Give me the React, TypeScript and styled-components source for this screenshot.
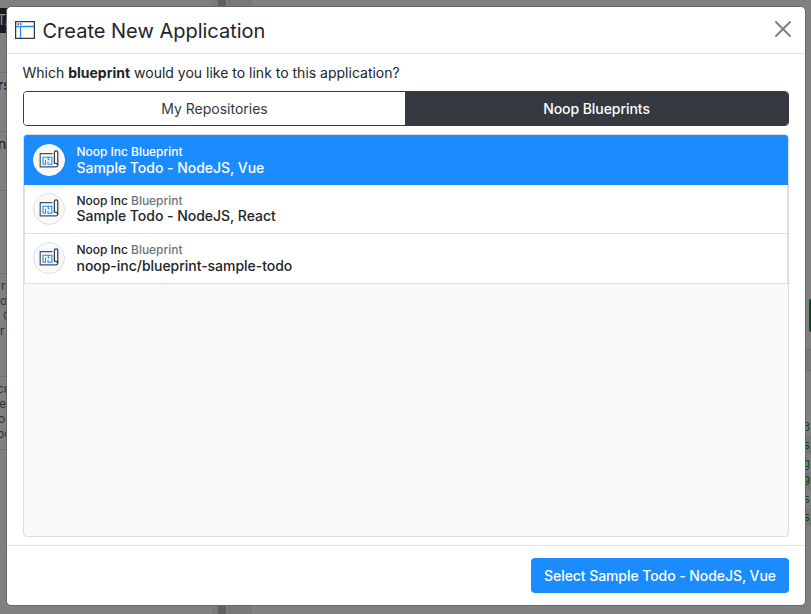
import React, { useState } from "react";
import styled, { createGlobalStyle } from "styled-components";

const GlobalStyle = createGlobalStyle`
  *, *::before, *::after { box-sizing: border-box; }
  body {
    margin: 0;
    overflow: hidden;
    color: #212529;
    font-family: Inter, "Liberation Sans", sans-serif;
    font-size: 14px;
    line-height: 21px;
  }
  button { font: inherit; }
`;

const Screen = styled.div`
  position: relative;
  width: 811px;
  height: 614px;
  overflow: hidden;
  background: #808080;
`;

/* Dimmed page under the dialog */
const Page = styled.div`
  display: flex;
  width: 100%;
  height: 100%;
`;

const Sidebar = styled.div`
  width: 214px;
  height: 614px;
  overflow: hidden;
  border-right: 1px solid #757575;
`;

const Band = styled.div<{ $h: number; $pad?: number; $line?: boolean; $dark?: boolean; $indent?: number }>`
  height: ${(p) => p.$h}px;
  padding-top: ${(p) => p.$pad ?? 0}px;
  text-indent: ${(p) => p.$indent ?? 0}px;
  border-bottom: ${(p) => (p.$line ? "1px solid #707070" : "none")};
  background: ${(p) => (p.$dark ? "#191c1f" : "transparent")};
  color: ${(p) => (p.$dark ? "#8c8c8c" : "#111315")};
  white-space: pre;
`;

const Note = styled.div<{ $indent?: number }>`
  height: 15px;
  text-indent: ${(p) => p.$indent ?? 0}px;
  color: #303337;
  font-size: 12px;
  line-height: 15px;
`;

const Gutter = styled.div<{ $w: number; $color: string; $edge?: boolean }>`
  width: ${(p) => p.$w}px;
  background: ${(p) => p.$color};
  border-left: ${(p) => (p.$edge ? "1px solid #6f6f6f" : "none")};
  border-right: ${(p) => (p.$edge ? "1px solid #747474" : "none")};
`;

const Main = styled.div`
  flex: 1;
  display: flex;
  flex-direction: column;
  align-items: flex-end;
  padding-top: 299px;
  overflow: hidden;
`;

const GreenButton = styled.div`
  flex: none;
  width: 2px;
  height: 33px;
  border-radius: 3px 0 0 3px;
  background: #094520;
`;

const Strip = styled.div`
  flex: none;
  width: 8px;
  height: 22px;
  margin-top: 17px;
  border: solid #707070;
  border-width: 1px 0;
  background: #797978;
`;

const LogLine = styled.div<{ $shaded?: boolean }>`
  flex: none;
  width: 8px;
  height: 18px;
  overflow: hidden;
  white-space: pre;
  background: ${(p) => (p.$shaded ? "#777" : "transparent")};
  color: #08500c;
  font: 12px/18px "DejaVu Sans Mono", monospace;
`;

const LogBlock = styled.div`
  margin-top: 47px;
`;

const Dialog = styled.section`
  position: absolute;
  left: 6px;
  top: 6px;
  width: 800px;
  height: 600px;
  display: flex;
  flex-direction: column;
  border: 1px solid #666;
  border-radius: 5px;
  background: #fff;
`;

const Header = styled.header`
  flex: none;
  display: flex;
  align-items: center;
  height: 47px;
  padding: 0 14px 0 8px;
  border-bottom: 1px solid #dee2e6;
`;

const Title = styled.h1`
  flex: 1;
  margin: 1px 0 0 7.5px;
  font-size: 20px;
  font-weight: 400;
  line-height: 30px;
`;

const CloseButton = styled.button`
  display: flex;
  width: 16px;
  height: 16px;
  padding: 0;
  margin-bottom: 3px;
  border: 0;
  background: none;
`;

const Body = styled.div`
  flex: 1;
  display: flex;
  flex-direction: column;
  padding: 8px 16px 8px;
`;

const Question = styled.p`
  margin: 0 0 8px -0.5px;
  strong { font-weight: 700; }
`;

const Tabs = styled.div`
  flex: none;
  display: grid;
  grid-template-columns: 381px 1fr;
  height: 35px;
  overflow: hidden;
  border: 1px solid #343a40;
  border-radius: 4px;
`;

const Tab = styled.button<{ $active: boolean }>`
  padding: 0;
  border: 0;
  background: ${(p) => (p.$active ? "#343a40" : "#fff")};
  color: ${(p) => (p.$active ? "#fff" : "#343a40")};
  font-weight: ${(p) => (p.$active ? 500 : 400)};
  letter-spacing: ${(p) => (p.$active ? "-0.06px" : "0")};
`;

const List = styled.div`
  flex: 1;
  margin-top: 8px;
  overflow: hidden;
  border: 1px solid #dadcde;
  border-radius: 4px;
  background: #f8f9fa;
`;

const Item = styled.div<{ $selected: boolean; $h: number; $top: number }>`
  display: flex;
  align-items: flex-start;
  gap: 11.5px;
  height: ${(p) => p.$h}px;
  padding-top: ${(p) => p.$top}px;
  padding-left: ${(p) => (p.$selected ? 9 : 8)}px;
  border: solid #dfdfdf;
  border-width: ${(p) => (p.$selected ? "0" : "0 1px 1px")};
  background: ${(p) => (p.$selected ? "#1a8cff" : "#fff")};
  color: ${(p) => (p.$selected ? "#fff" : "#212529")};
`;

const Avatar = styled.div<{ $selected: boolean }>`
  display: flex;
  align-items: center;
  justify-content: center;
  width: 32px;
  height: 32px;
  border: 1px solid ${(p) => (p.$selected ? "#f8f9fa" : "#dee2e6")};
  border-radius: 50%;
  background: #f8f9fa;
`;

const Owner = styled.div<{ $h: number }>`
  font-size: 12px;
  font-weight: 500;
  line-height: 16px;
  height: ${(p) => p.$h}px;
  letter-spacing: -0.03px;
`;

const Kind = styled.span<{ $selected: boolean }>`
  color: ${(p) => (p.$selected ? "#fff" : "#6c757d")};
`;

const Name = styled.div`
  font-weight: 500;
  line-height: 16px;
  letter-spacing: -0.03px;
`;

const Footer = styled.footer`
  flex: none;
  display: flex;
  justify-content: flex-end;
  height: 60px;
  padding: 12px 16px;
  border-top: 1px solid #dee2e6;
`;

const PrimaryButton = styled.button`
  height: 35px;
  width: 258px;
  padding: 0;
  border: 0;
  border-radius: 4px;
  background: #1a8cff;
  color: #fff;
  font-weight: 500;
  letter-spacing: -0.07px;
`;

const WindowIcon = () => (
  <svg width="20" height="18" viewBox="0 0 20 18" fill="none">
    <path d="M1 5.5H19M5.5 6V17" stroke="#1a8cff" strokeWidth="1.3" />
    <rect x=".6" y=".6" width="18.8" height="16.8" stroke="#343a40" strokeWidth="1.3" />
    <path d="M2.5 3H4M5 3H6.5" stroke="#343a40" strokeWidth="1.4" />
  </svg>
);

const BlueprintIcon = () => (
  <svg width="20" height="20" viewBox="0 0 20 20" fill="none">
    <path d="M13.5 3.6H1.2V16.9H17.2Q18.8 16.9 18.8 14.2" stroke="#4b5056" strokeWidth="1.2" />
    <path d="M15.4 13.2V2.3Q15.4 .9 17.1 .9Q18.8 .9 18.8 2.3V15Q18 13.2 15.4 13.2Z" stroke="#343a40" strokeWidth="1.2" />
    <path d="M4 14.2V7.2H12.9V14.2H9V11.7M4 14.2H6.5V9.7M9.2 7.2V9.6H10.4" stroke="#1a8cff" strokeWidth="1.1" />
  </svg>
);

const CloseIcon = () => (
  <svg width="16" height="16" viewBox="0 0 16 16">
    <path d="M1 1L15 15M15 1L1 15" stroke="#7f7f7f" strokeWidth="1.9" strokeLinecap="round" />
  </svg>
);

const blueprints = [
  { name: "Sample Todo - NodeJS, Vue", height: 50, top: 9, ownerHeight: 16 },
  { name: "Sample Todo - NodeJS, React", height: 49, top: 8, ownerHeight: 15 },
  { name: "noop-inc/blueprint-sample-todo", height: 50, top: 8, ownerHeight: 16 },
];

const tabs = ["My Repositories", "Noop Blueprints"];

const logLines = ["3:", "s_", "g:", "9\"", "s_", "s_"];

export default function App() {
  const [tab, setTab] = useState(1);
  const [selected, setSelected] = useState(0);
  return (
    <Screen>
      <GlobalStyle />
      <Page aria-hidden>
        <Sidebar>
          <Band $h={8} />
          <Band $h={25} $pad={1} $dark $indent={-3}>TA</Band>
          <Band $h={40} $line />
          <Band $h={59} $pad={1} $line $indent={-2}>rs</Band>
          <Band $h={59} $pad={1} $line $indent={-2}>n</Band>
          <Band $h={83} $line />
          <Band $h={103} $pad={4} $line>
            <Note $indent={1}>re</Note>
            <Note>o</Note>
            <Note $indent={3}>C</Note>
            <Note>r</Note>
          </Band>
          <Band $h={73} $pad={4} $line>
            <Note $indent={-3}>cu</Note>
            <Note $indent={-1}>e</Note>
            <Note $indent={-2}>or</Note>
            <Note $indent={-3}>be</Note>
          </Band>
        </Sidebar>
        <Gutter $w={4} $color="#7b7b7b" />
        <Gutter $w={8} $color="#606060" />
        <Gutter $w={3} $color="#7b7b7b" />
        <Gutter $w={22} $color="#7b7a77" $edge />
        <Main>
          <GreenButton />
          <Strip />
          <LogBlock>
            {logLines.map((line, i) => (
              <LogLine key={i} $shaded={i % 2 === 1}>{line}</LogLine>
            ))}
          </LogBlock>
        </Main>
      </Page>
      <Dialog role="dialog" aria-label="Create New Application">
        <Header>
          <WindowIcon />
          <Title>Create New Application</Title>
          <CloseButton aria-label="Close"><CloseIcon /></CloseButton>
        </Header>
        <Body>
          <Question>
            Which <strong>blueprint</strong> would you like to link to this application?
          </Question>
          <Tabs>
            {tabs.map((label, i) => (
              <Tab key={label} $active={i === tab} onClick={() => setTab(i)}>{label}</Tab>
            ))}
          </Tabs>
          <List>
            {blueprints.map((b, i) => (
              <Item key={b.name} $selected={i === selected} $h={b.height} $top={b.top} onClick={() => setSelected(i)}>
                <Avatar $selected={i === selected}><BlueprintIcon /></Avatar>
                <div>
                  <Owner $h={b.ownerHeight}>
                    Noop Inc <Kind $selected={i === selected}>Blueprint</Kind>
                  </Owner>
                  <Name>{b.name}</Name>
                </div>
              </Item>
            ))}
          </List>
        </Body>
        <Footer>
          <PrimaryButton>Select {blueprints[selected].name}</PrimaryButton>
        </Footer>
      </Dialog>
    </Screen>
  );
}
